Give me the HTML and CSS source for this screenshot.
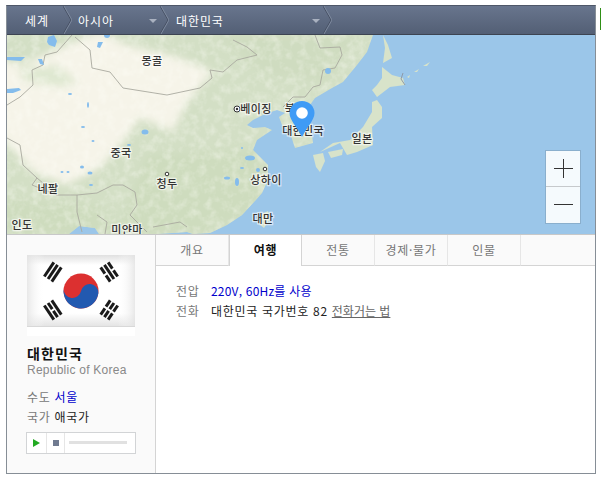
FILE: index.html
```html
<!DOCTYPE html>
<html lang="ko">
<head>
    <meta charset="UTF-8">
    <meta name="viewport" content="width=device-width, initial-scale=1.0">
    <title>대한민국</title>
    <link rel="stylesheet" href="styles.css">
</head>
<body>

<div class="side-mark"></div>

<div class="container">
    <div class="crumbs">
        <div class="crumb crumb-first">
            <span>세계</span>
            <svg class="chevron" width="9" height="28" viewBox="0 0 9 28"><path class="chevron-dark" d="M0 0 L8 14 L0 28"/><path class="chevron-light" d="M1 0 L9 14 L1 28"/></svg>
        </div>
        <div class="crumb crumb-asia">
            <span>아시아</span>
            <i class="caret"></i>
            <svg class="chevron" width="9" height="28" viewBox="0 0 9 28"><path class="chevron-dark" d="M0 0 L8 14 L0 28"/><path class="chevron-light" d="M1 0 L9 14 L1 28"/></svg>
        </div>
        <div class="crumb crumb-korea">
            <span>대한민국</span>
            <i class="caret"></i>
            <svg class="chevron" width="9" height="28" viewBox="0 0 9 28"><path class="chevron-dark" d="M0 0 L8 14 L0 28"/><path class="chevron-light" d="M1 0 L9 14 L1 28"/></svg>
        </div>
    </div>

    <div class="map">
        <svg class="map-art" width="588" height="199" viewBox="0 0 588 199">
            <defs>
                <filter id="soft" x="-20%" y="-20%" width="140%" height="140%"><feGaussianBlur stdDeviation="4"/></filter>
                <filter id="edge" x="-5%" y="-5%" width="110%" height="110%"><feGaussianBlur stdDeviation=".5"/></filter>
                <filter id="mottle" x="0" y="0" width="100%" height="100%">
                    <feTurbulence type="fractalNoise" baseFrequency=".12" numOctaves="3" seed="4"/>
                    <feColorMatrix values="0 0 0 0 1  0 0 0 0 1  0 0 0 0 .95  .8 0 0 0 -.34"/>
                </filter>
                <clipPath id="land-clip">
                    <path d="M0 0 L366 0 L360 17 L350 30 L336 47 L325 53 L308 63 L303 70 L303 87 L305 100 L306 108 L288 113 L286 107 L283 97 L275 90 L272 82 L278 78 L270 75 L258 79 L246 85 L240 90 L246 93 L258 92 L265 95 L250 105 L246 115 L253 122 L261 130 L261 145 L255 158 L246 168 L235 180 L220 190 L203 198 L186 199 L180 197 L150 199 L92 199 L88 193 L72 191 L62 199 L0 199 Z"/>
                </clipPath>
            </defs>

            <rect width="588" height="199" fill="#9bc6e9"/>

            <g clip-path="url(#land-clip)">
                <rect width="588" height="199" fill="#d3dfc5"/>
                <g filter="url(#soft)">
                    <path fill="#f6f4e9" d="M-10 23 L13 30 L43 17 L93 -4 L120 10 L173 23 L206 37 L180 67 L166 97 L133 83 L116 107 L93 133 L60 150 L26 137 L-10 97 Z"/>
                    <path fill="#dfe8d1" d="M13 32 L50 30 L72 48 L50 52 L15 46 Z"/>
                    <path fill="#cedcbe" d="M140 120 L250 115 L255 170 L200 199 L110 199 Z"/>
                    <path fill="#cedcbe" d="M-10 165 L90 170 L120 199 L-10 199 Z"/>
                    <path fill="#cfdcc0" d="M210 0 L350 0 L320 45 L260 40 Z"/>
                </g>
                <rect width="588" height="199" filter="url(#mottle)"/>
            </g>

            <!-- islands -->
            <g fill="#d8e3ca" filter="url(#edge)">
                <path d="M375 32 L385 40 L396 43 L398 50 L383 52 L370 62 L365 55 L370 50 L375 43 Z"/>
                <path d="M376 0 L381 10 L385 23 L376 28 L378 13 Z"/>
                <path d="M370 65 L375 72 L375 83 L365 92 L366 110 L350 117 L340 120 L333 108 L313 117 L326 108 L343 105 L356 92 L365 77 L365 67 Z"/>
                <path d="M306 120 L316 118 L318 126 L313 137 L309 132 Z"/>
                <path d="M321 117 L336 114 L335 120 L324 123 Z"/>
                <path d="M253 180 L261 176 L263 184 L257 193 L251 188 Z"/>
                <path d="M400 42 L403 40 L402 43 Z M407 37 L412 34 L410 37 Z M416 31 L423 27 L420 31 Z"/>
            </g>

            <!-- borders -->
            <g fill="none" stroke="#a9a99f" stroke-width=".9">
                <path d="M68 2 L83 15 L85 33 L103 37 L116 53 L160 60 L193 53 L205 43 L203 35 L216 37 L230 25 L250 20 L240 12 L226 5"/>
                <path d="M308 0 L313 13 L333 12 L335 20 L328 33 L316 35 L313 50 L306 52 L298 62 L286 62 L276 72"/>
                <path d="M65 0 L50 17 L38 20 L36 30 L25 35 L26 50 L13 62 L0 70"/>
                <path d="M0 103 L13 110 L16 130 L30 143 L50 160 L70 160 L90 158 L106 150 L116 150 L128 157 L130 170 L123 180 L140 197"/>
                <path d="M70 160 L70 177 L75 197"/>
                <path d="M90 180 L100 187 L98 199"/>
                <path d="M146 192 L173 187 L180 192"/>
                <path d="M30 143 L25 150 L50 160"/>
            </g>
            <path fill="none" stroke="#8e9aa8" d="M396 38 L394 44 L398 50"/>

            <!-- lakes -->
            <g fill="#84bcec">
                <path d="M0 22 L18 22 L14 26 L0 25 Z"/>
                <path d="M31 24 L35 24 L37 30 L33 29 Z"/>
                <path d="M41 2 L47 0 L50 6 L48 12 L42 10 L40 7 Z"/>
                <path d="M91 7 L96 7 L93 13 L90 12 Z"/>
                <path d="M0 54 L12 53 L14 55 L6 58 L0 58 Z"/>
                <ellipse cx="100" cy="0" rx="3" ry="3"/>
                <ellipse cx="63" cy="59" rx="2" ry="1"/>
                <ellipse cx="81" cy="70" rx="1" ry="3"/>
                <ellipse cx="76" cy="92" rx="2" ry="1"/>
                <ellipse cx="138" cy="97" rx="3.500" ry="2.500"/>
                <ellipse cx="122" cy="110" rx="2" ry="1"/>
                <ellipse cx="86" cy="106" rx="1.500" ry="1"/>
                <ellipse cx="75" cy="132" rx="2" ry="1.500"/>
                <ellipse cx="83" cy="138" rx="2.500" ry="1.500"/>
                <ellipse cx="55" cy="137" rx="1.500" ry="1"/>
                <ellipse cx="61" cy="137" rx="1.500" ry="1"/>
                <ellipse cx="84" cy="150" rx="2" ry="1"/>
                <ellipse cx="243" cy="123" rx="5" ry="2.500"/>
                <ellipse cx="230" cy="147" rx="2" ry="4"/>
                <ellipse cx="220" cy="143" rx="3" ry="1.500"/>
                <ellipse cx="251" cy="135" rx="2" ry="2"/>
                <ellipse cx="235" cy="133" rx="2" ry="1"/>
                <ellipse cx="235" cy="113" rx="1" ry="1"/>
                <ellipse cx="321" cy="36" rx="3" ry="3"/>
            </g>

            <!-- city marks -->
            <g fill="#fff" stroke="#333" stroke-width="1">
                <circle cx="230" cy="74" r="3"/>
                <circle cx="160" cy="139" r="1.800"/>
                <circle cx="258" cy="134" r="1.800"/>
            </g>
            <circle cx="230" cy="74" r="1.200" fill="#333"/>

            <!-- labels -->
            <g class="map-labels">
                <text x="145" y="30" text-anchor="middle">몽골</text>
                <text x="114" y="122" text-anchor="middle">중국</text>
                <text x="160" y="153" text-anchor="middle">청두</text>
                <text x="41" y="158" text-anchor="middle">네팔</text>
                <text x="15" y="194" text-anchor="middle">인도</text>
                <text x="120" y="199" text-anchor="middle">미얀마</text>
                <text x="249" y="78" text-anchor="middle">베이징</text>
                <text x="283" y="78" text-anchor="middle">북</text>
                <text x="296" y="100" text-anchor="middle">대한민국</text>
                <text x="355" y="108" text-anchor="middle">일본</text>
                <text x="259" y="149" text-anchor="middle">상하이</text>
                <text x="256" y="188" text-anchor="middle">대만</text>
            </g>

            <!-- pin -->
            <path fill="#3f9bf6" d="M295 66 C288 66 282.500 71.500 282.500 78 C282.500 85 290 92 295 102 C300 92 307.500 85 307.500 78 C307.500 71.500 302 66 295 66 Z"/>
            <circle cx="295" cy="78" r="5.800" fill="#fff"/>
        </svg>

        <div class="zoom-box">
            <div class="zoom-btn"><span class="zoom-h"></span><span class="zoom-v"></span></div>
            <div class="zoom-btn zoom-minus"><span class="zoom-h"></span></div>
        </div>
    </div>

    <div class="bottom">
        <div class="side">
            <svg class="flag" width="108" height="81" viewBox="0 0 108 81">
                <defs>
                    <linearGradient id="flag-top" x1="0" y1="0" x2="0" y2="1"><stop offset="0" stop-color="#e0e0e0"/><stop offset=".14" stop-color="#fff"/><stop offset=".82" stop-color="#fff"/><stop offset="1" stop-color="#e4e4e4"/></linearGradient>
                    <linearGradient id="flag-side" x1="0" y1="0" x2="1" y2="0"><stop offset="0" stop-color="#e2e2e2" stop-opacity=".8"/><stop offset=".16" stop-color="#fff" stop-opacity="0"/><stop offset=".84" stop-color="#fff" stop-opacity="0"/><stop offset="1" stop-color="#e2e2e2" stop-opacity=".8"/></linearGradient>
                </defs>
                <rect width="108" height="81" fill="#ffffff"/>
                <rect width="108" height="71" fill="url(#flag-top)"/>
                <rect width="108" height="71" fill="url(#flag-side)"/>
                <rect y="71" width="108" height="1" fill="#d8d8d8"/>
                <circle cx="54" cy="36" r="17.500" fill="#dc3030"/>
                <path fill="#2259b0" d="M36.600 34 A8.800 8.800 0 0 0 54 36 A8.800 8.800 0 0 1 71.400 38 A17.500 17.500 0 0 1 36.600 34 Z"/>
                <g fill="#1a1a1a">
                    <g transform="rotate(-56 54 36)">
                        <rect x="45.500" y="-4" width="17" height="3"/><rect x="45.500" y="0.500" width="17" height="3"/><rect x="45.500" y="5" width="17" height="3"/>
                        <rect x="45.500" y="64" width="7.500" height="3"/><rect x="55" y="64" width="7.500" height="3"/><rect x="45.500" y="68.500" width="7.500" height="3"/><rect x="55" y="68.500" width="7.500" height="3"/><rect x="45.500" y="73" width="7.500" height="3"/><rect x="55" y="73" width="7.500" height="3"/>
                    </g>
                    <g transform="rotate(56 54 36)">
                        <rect x="45.500" y="-4" width="7.500" height="3"/><rect x="55" y="-4" width="7.500" height="3"/><rect x="45.500" y="0.500" width="17" height="3"/><rect x="45.500" y="5" width="7.500" height="3"/><rect x="55" y="5" width="7.500" height="3"/>
                        <rect x="45.500" y="64" width="17" height="3"/><rect x="45.500" y="68.500" width="7.500" height="3"/><rect x="55" y="68.500" width="7.500" height="3"/><rect x="45.500" y="73" width="17" height="3"/>
                    </g>
                </g>
            </svg>
            <h2 class="country-name">대한민국</h2>
            <div class="country-eng">Republic of Korea</div>
            <div class="fact"><span class="fact-label">수도</span> <span class="link-blue">서울</span></div>
            <div class="fact"><span class="fact-label">국가</span> <span class="fact-dark">애국가</span></div>
            <div class="player">
                <div class="player-btn"><i class="play-icon"></i></div>
                <div class="player-btn player-stop"><i class="stop-icon"></i></div>
                <div class="player-track"></div>
            </div>
        </div>

        <div class="main">
            <div class="tabs">
                <div class="tab">개요</div>
                <div class="tab tab-active">여행</div>
                <div class="tab">전통</div>
                <div class="tab">경제·물가</div>
                <div class="tab">인물</div>
                <div class="tab-rest"></div>
            </div>
            <table class="info">
                <tr>
                    <td class="info-label">전압</td>
                    <td class="link-blue info-volt">220V, 60Hz를 사용</td>
                </tr>
                <tr>
                    <td class="info-label">전화</td>
                    <td>대한민국 국가번호 82 <span class="phone-link">전화거는 법</span></td>
                </tr>
            </table>
        </div>
    </div>
</div>

</body>
</html>
```

FILE: styles.css
```css
body {
    font-family: "Noto Sans CJK KR", "Liberation Sans", sans-serif;
    font-size: 12px;
    letter-spacing: 0.7px;
    margin: 0;
    padding: 0;
    background-color: #ffffff;
    color: #222222;
}

.container {
    width: 588px;
    margin: 5px 0 0 6px;
    border: 1px solid #868e96;
    border-top-color: #4e5768;
}

.side-mark {
    position: absolute;
    left: 600px;
    top: 8px;
    width: 1px;
    height: 22px;
    background: #2f8f16;
}

.crumbs {
    display: flex;
    height: 28px;
    background: linear-gradient(#68758d, #535f75);
    border-bottom: 1px solid #3d4452;
    color: #ffffff;
    letter-spacing: 0.9px;
}

.crumb {
    position: relative;
    display: flex;
    align-items: center;
    box-sizing: border-box;
    height: 28px;
}

.crumb-first {
    width: 64px;
    padding-left: 18px;
}

.crumb-asia {
    width: 97px;
    padding-left: 7px;
}

.crumb-korea {
    width: 163px;
    padding-left: 8px;
}

.chevron {
    position: absolute;
    right: -1px;
    top: 0;
}

.chevron-dark {
    fill: none;
    stroke: #465064;
}

.chevron-light {
    fill: none;
    stroke: #7d899e;
}

.caret {
    position: absolute;
    right: 11px;
    top: 13px;
    width: 0;
    height: 0;
    border-left: 4px solid transparent;
    border-right: 4px solid transparent;
    border-top: 4px solid #a9b1c0;
}

.map {
    position: relative;
    height: 199px;
    overflow: hidden;
}

.map-art {
    display: block;
}

.map-labels text {
    font-size: 11px;
    font-weight: 500;
    letter-spacing: 0.3px;
    fill: #333333;
    stroke: rgba(255, 255, 255, 0.6);
    stroke-width: 2.5px;
    paint-order: stroke;
}

.zoom-box {
    position: absolute;
    left: 538px;
    top: 115px;
    width: 34px;
    border: 1px solid #8aafcd;
    background: #f5fafd;
}

.zoom-btn {
    position: relative;
    height: 35px;
}

.zoom-minus {
    height: 36px;
    border-top: 1px solid #c6c9cc;
}

.zoom-h {
    position: absolute;
    left: 8px;
    top: 17px;
    width: 19px;
    height: 1px;
    background: #333333;
}

.zoom-v {
    position: absolute;
    left: 17px;
    top: 8px;
    width: 1px;
    height: 19px;
    background: #333333;
}

.bottom {
    display: flex;
    height: 238px;
    border-top: 1px solid #c8c8c8;
}

.side {
    box-sizing: border-box;
    width: 149px;
    padding: 20px 0 0 20px;
    background: #fafafa;
    border-right: 1px solid #d4d4d4;
}

.flag {
    display: block;
}

.country-name {
    margin: 7px 0 0;
    font-size: 14px;
    line-height: 20px;
    font-weight: 700;
    letter-spacing: 1.1px;
    color: #111111;
}

.country-eng {
    margin-bottom: 10px;
    font-family: "Liberation Sans", sans-serif;
    line-height: 14px;
    letter-spacing: 0.25px;
    color: #888888;
}

.fact {
    line-height: 20px;
}

.fact-label {
    color: #777777;
}

.fact-dark {
    color: #222222;
}

.link-blue {
    color: #0000cc;
}

.player {
    display: flex;
    box-sizing: border-box;
    width: 110px;
    height: 22px;
    margin: 5px 0 0 -1px;
    background: #ffffff;
    border: 1px solid #d2d4d6;
}

.player-btn {
    display: flex;
    align-items: center;
    justify-content: center;
    width: 19px;
    border-right: 1px solid #e6e6e6;
}

.player-stop {
    width: 17px;
}

.play-icon {
    width: 0;
    height: 0;
    border-top: 4px solid transparent;
    border-bottom: 4px solid transparent;
    border-left: 7px solid #22aa22;
}

.stop-icon {
    width: 6px;
    height: 6px;
    background: #707a90;
}

.player-track {
    width: 58px;
    height: 3px;
    margin: 8px 0 0 4px;
    background: #e1e1e1;
}

.main {
    flex: 1;
    background: #ffffff;
}

.tabs {
    display: flex;
    height: 31px;
    background: #fafafa;
}

.tab {
    box-sizing: border-box;
    width: 73px;
    height: 31px;
    line-height: 30px;
    text-align: center;
    color: #777777;
    border-right: 1px solid #e6e6e6;
    border-bottom: 1px solid #d4d4d4;
}

.tab-active {
    background: #ffffff;
    color: #111111;
    font-weight: 700;
    border-left: 1px solid #d4d4d4;
    border-right: 1px solid #d4d4d4;
    border-bottom: none;
}

.tab-rest {
    flex: 1;
    border-bottom: 1px solid #d4d4d4;
}

.info {
    margin: 14px 0 0 20px;
    border-spacing: 0;
}

.info td {
    height: 20px;
    padding: 0;
}

.info-label {
    width: 35px;
    color: #777777;
}

.info-volt {
    letter-spacing: 0.2px;
}

.phone-link {
    color: #666666;
    text-decoration: underline;
    letter-spacing: 0;
}
```
